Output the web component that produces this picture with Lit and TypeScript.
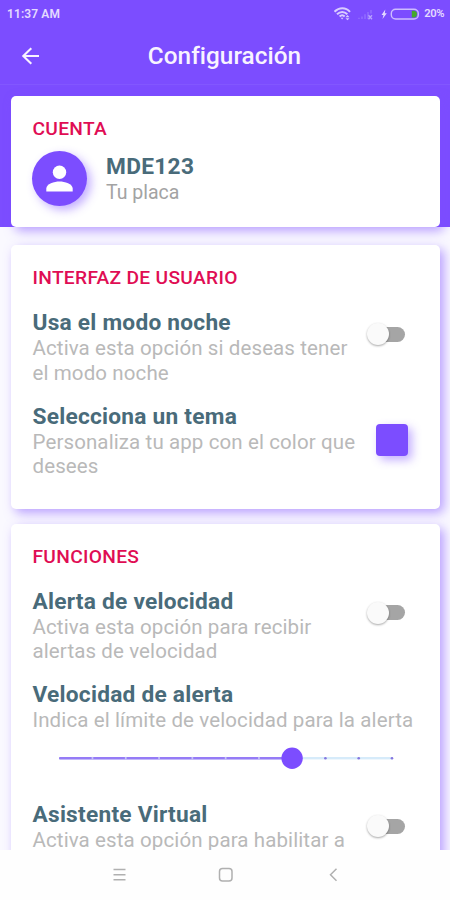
import { LitElement, html, css, svg } from "lit";
import { customElement, property } from "lit/decorators.js";

@customElement("status-bar")
class StatusBar extends LitElement {
  static styles = css`
    :host { display: flex; align-items: center; height: 27px; padding: 0 6px 0 7px; color: #e4daff; font-size: 12px; font-weight: 600; }
    .time { flex: 1; letter-spacing: .1px; }
    .icons { display: flex; align-items: center; }
    svg { display: block; }
    .charge { font-size: 11.200px; margin-left: 4px; letter-spacing: -0.400px; }
  `;
  render() {
    return html`
      <span class="time">11:37 AM</span>
      <div class="icons">
        <svg width="86" height="14" viewBox="0 0 86 14" fill="none" stroke="#d9ccff">
          <path d="M.5 4.800C5-.1 11.700-.1 16 4.800M3 7.300c3.200-3.200 7.200-3.200 10.300 0M5.600 9.500c1.700-1.600 3.500-1.600 5.100 0" stroke-width="2"/>
          <path d="M6.700 10.700h2.800l-1.400 1.900zM13.500 8l-2 2.300h4zM11.500 11.200h4l-2 2z" fill="#d9ccff" stroke="none"/>
          <path d="M25 12v-1.300M28 12V9.500M31 12V7.300M34 12V5M37 6.500V3" stroke="#8f69ff" stroke-width="1.700"/>
          <path d="M34.500 8.300l3.500 4M38 8.300l-3.500 4" stroke="#b8a2ff" stroke-width="1.300"/>
          <path d="M51.300 2.500L47.500 8h2l-1 4 4.300-5.700h-2z" fill="#e4daff" stroke="none"/>
          <rect x="57.300" y="2.200" width="27" height="9.800" rx="4.300" stroke="#cdbcff" stroke-width="1.400"/>
          <path d="M77.800 3.800h2a3 3 0 0 1 3.200 3.300 3 3 0 0 1-3.200 3.300h-2z" fill="#44a82d" stroke="none"/>
        </svg>
        <span class="charge">20%</span>
      </div>
    `;
  }
}

@customElement("toggle-switch")
class ToggleSwitch extends LitElement {
  static styles = css`
    :host { display: flex; align-items: center; width: 40px; height: 24px; }
    .track { width: 34px; height: 15px; margin-left: 4px; border-radius: 8px; background: #a5a5a5; display: flex; align-items: center; }
    .thumb { flex: none; width: 22px; height: 22px; margin-left: -4px; border-radius: 50%; background: #fafafa; box-shadow: 0 1px 2px rgba(0,0,0,.26), 0 1px 3px rgba(0,0,0,.1); }
  `;
  render() {
    return html`<div class="track"><div class="thumb"></div></div>`;
  }
}

@customElement("step-slider")
class StepSlider extends LitElement {
  @property({ type: Number }) value = 7;
  @property({ type: Number }) steps = 10;
  static styles = css`
    :host { display: block; height: 24px; }
    svg { display: block; overflow: visible; }
  `;
  render() {
    const gap = 33.3;
    const x = this.value * gap;
    const ticks = Array.from({ length: this.steps + 1 }, (_, i) => i);
    return html`
      <svg width="336" height="24" viewBox="0 0 336 24">
        <rect x="0" y="11" width="334" height="2.400" fill="#d6ebfa"/>
        <rect x="0" y="10.900" width=${x} height="2.600" rx="1" fill="#957bf6"/>
        ${ticks.map(i => i > 0 && (i < this.value
          ? svg`<rect x=${i * gap - 0.7} y="10.900" width="1.700" height="2.600" fill="#c5c3f8"/>`
          : svg`<circle cx=${i * gap} cy="12.200" r="1.300" fill="#8577e0"/>`) || null)}
        <circle cx=${x} cy="12.200" r="10.700" fill="#7c4dff"/>
      </svg>
    `;
  }
}

@customElement("setting-row")
class SettingRow extends LitElement {
  @property() label = "";
  @property() detail = "";
  static styles = css`
    :host { display: flex; align-items: center; justify-content: space-between; }
    .copy { flex: 1; min-width: 0; }
    .label { font-size: 22.700px; line-height: 29px; margin-bottom: -1px; font-weight: 700; color: #496b7a; white-space: nowrap; letter-spacing: .24px; }
    .detail { font-size: 20.500px; line-height: 24.500px; color: #b9b9b9; white-space: pre; letter-spacing: .11px; }
  `;
  render() {
    return html`
      <div class="copy">
        <div class="label">${this.label}</div>
        <div class="detail">${this.detail}</div>
      </div>
      <slot></slot>
    `;
  }
}

@customElement("app-root")
class AppRoot extends LitElement {
  static styles = css`
    :host { display: flex; flex-direction: column; width: 450px; height: 900px; overflow: hidden; font-family: Roboto, sans-serif; background: #fff; }
    .top { flex: none; height: 85px; background: #7c4dff; border-bottom: 1px solid #8257ff; box-sizing: border-box; color: #fff; }
    .bar { display: grid; grid-template-columns: 60px 1fr 60px; align-items: center; height: 57px; }
    .back { margin-left: 21px; display: block; }
    .bar h1 { margin: 0 1px 0 0; text-align: center; font-size: 24.300px; line-height: 30px; font-weight: 500; letter-spacing: .05px; color: #f8f3ff; }
    .content { flex: 1; min-height: 0; overflow: hidden; padding: 11px 10px 0 11px; background: linear-gradient(#7c4dff 142px, #faf9ff 142px); display: flex; flex-direction: column; }
    .card { flex: none; box-sizing: border-box; padding: 19px 21px 0 21.500px; border-radius: 5px; background: #fff; box-shadow: 4px 4px 11px rgba(124,77,255,.52); }
    .account { height: 131px; margin-bottom: 18px; }
    .ui { height: 263.500px; margin-bottom: 15px; }
    .functions { height: 420px; }
    h2 { margin: 0; font-size: 19.200px; line-height: 28px; font-weight: 500; letter-spacing: .3px; color: #e00d54; }
    .profile { display: flex; align-items: center; gap: 19px; margin: 8px 0 0 -.5px; }
    .avatar { width: 55px; height: 55px; border-radius: 50%; background: #7c4dff; box-shadow: 4px 4px 10px rgba(124,77,255,.45); }
    .avatar svg { display: block; }
    .plate { font-size: 22.700px; line-height: 26px; font-weight: 700; color: #496b7a; letter-spacing: .3px; margin-top: 2px; }
    .note { font-size: 19.500px; line-height: 25px; color: #a3a3a3; letter-spacing: 0; }
    .rows { display: flex; flex-direction: column; gap: 16.500px; margin-top: 16px; }
    toggle-switch { margin: -25px 12px 0 0; }
    .swatch { width: 32px; height: 32px; margin: 0 11px 0 0; border-radius: 4px; background: #7c4dff; box-shadow: 4px 4px 10px rgba(124,77,255,.45); }
    step-slider { margin: -3px 0 13.500px 26.500px; }
    .nav { flex: none; height: 50px; background: #fefefe; }
    .nav svg { display: block; }
  `;
  render() {
    return html`
      <header class="top">
        <status-bar></status-bar>
        <div class="bar">
          <svg class="back" width="20" height="20" viewBox="0 0 20 20" fill="none" stroke="#f8f3ff" stroke-width="2.100"><path d="M18 10H2.500M10.300 2.200 2.300 10l8 7.800"/></svg>
          <h1>Configuración</h1>
        </div>
      </header>
      <main class="content">
        <section class="card account">
          <h2>CUENTA</h2>
          <div class="profile">
            <div class="avatar">
              <svg width="55" height="55" viewBox="0 0 55 55" fill="#fff"><circle cx="27.500" cy="21.200" r="6.700"/><path d="M14.300 40.600v-3c0-4.500 8-7.100 13.200-7.100s13.200 2.600 13.200 7.100v3z"/></svg>
            </div>
            <div>
              <div class="plate">MDE123</div>
              <div class="note">Tu placa</div>
            </div>
          </div>
        </section>
        <section class="card ui">
          <h2>INTERFAZ DE USUARIO</h2>
          <div class="rows">
            <setting-row label="Usa el modo noche" .detail=${"Activa esta opción si deseas tener\nel modo noche"}><toggle-switch></toggle-switch></setting-row>
            <setting-row label="Selecciona un tema" .detail=${"Personaliza tu app con el color que\ndesees"}><div class="swatch"></div></setting-row>
          </div>
        </section>
        <section class="card functions">
          <h2>FUNCIONES</h2>
          <div class="rows">
            <setting-row label="Alerta de velocidad" .detail=${"Activa esta opción para recibir\nalertas de velocidad"}><toggle-switch></toggle-switch></setting-row>
            <setting-row label="Velocidad de alerta" detail="Indica el límite de velocidad para la alerta"></setting-row>
            <step-slider .value=${7} .steps=${10}></step-slider>
            <setting-row label="Asistente Virtual" .detail=${"Activa esta opción para habilitar a\n "}><toggle-switch></toggle-switch></setting-row>
          </div>
        </section>
      </main>
      <nav class="nav">
        <svg width="450" height="50" viewBox="0 0 450 50" fill="none" stroke="#b0b0b0" stroke-width="1.500">
          <path d="M113.500 19.500h12M113.500 24.700h12M113.500 29.700h12"/>
          <rect x="219.500" y="18.500" width="12.500" height="12.500" rx="3"/>
          <path d="M336.500 18.800l-6 6 6 6"/>
        </svg>
      </nav>
    `;
  }
}
